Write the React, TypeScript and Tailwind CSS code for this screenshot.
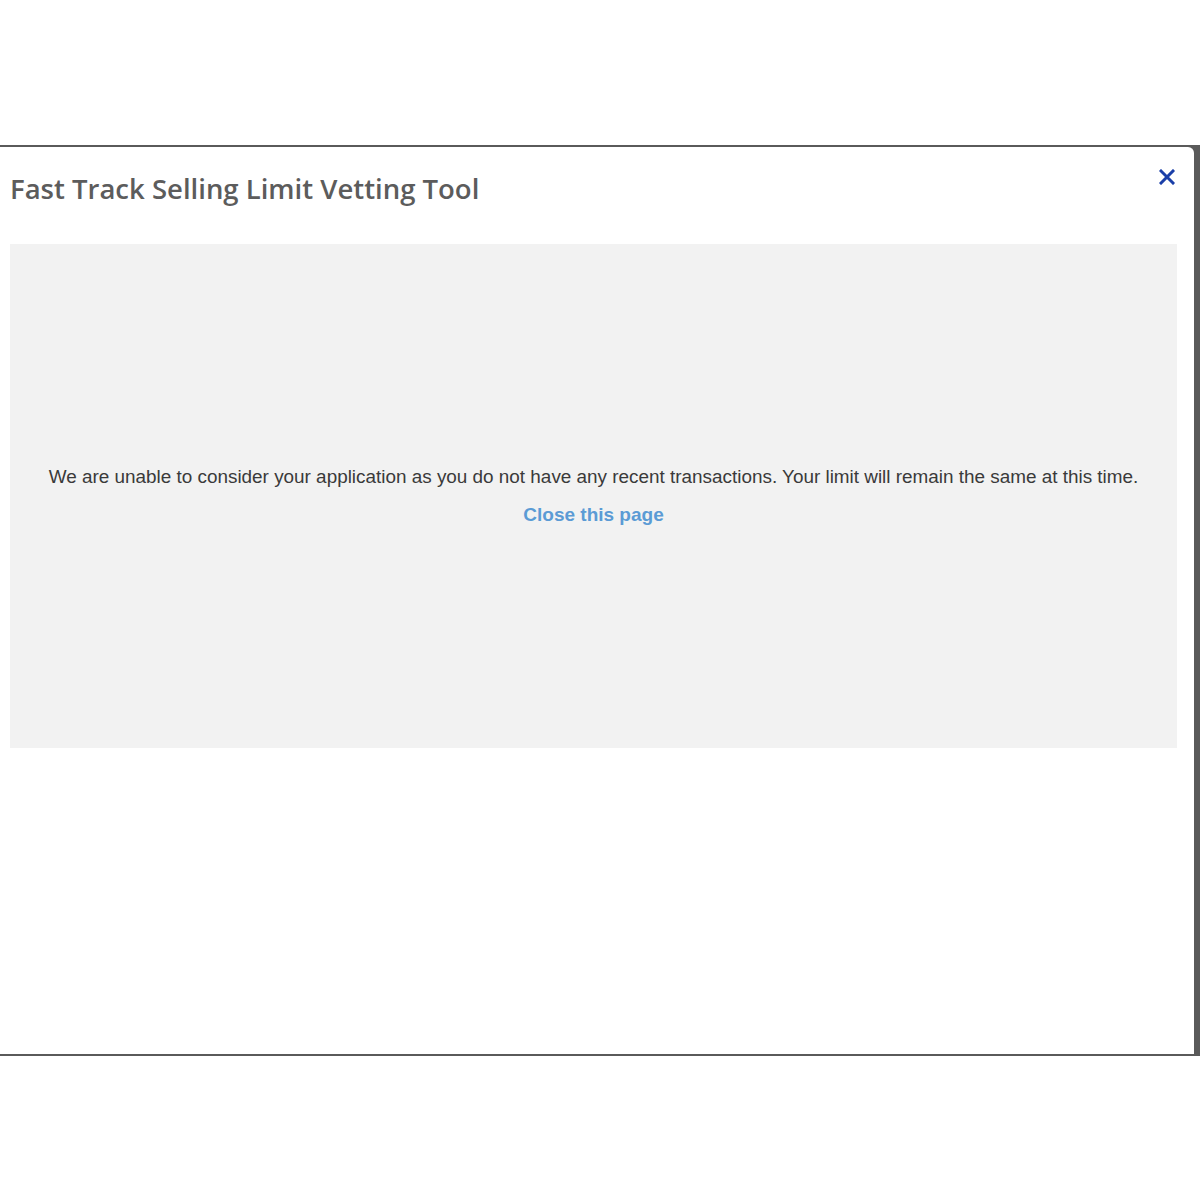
import React from 'react';

const App: React.FC = () => {
  return (
    <div className="w-[1200px] h-[1200px] bg-white overflow-hidden">
      {/* Backdrop strip behind the dialog */}
      <div className="mt-[145px] h-[911px] bg-[#5a5a5a] pt-[2px] pb-[2px] pr-[6px]">
        <div className="h-full bg-white rounded-tr-[6px] flex flex-col">
          {/* Header */}
          <div className="flex items-start justify-between pl-[10px] pr-[19px] pt-[23px] h-[97px]">
            <h1
              className="text-[27.5px] leading-[38px] font-semibold text-[#5c5c5c]"
              style={{ fontFamily: '"Open Sans", "DejaVu Sans", sans-serif' }}
            >
              Fast Track Selling Limit Vetting Tool
            </h1>
            <button className="mt-[-1px] text-[#1a3fa8]" aria-label="Close">
              <svg width="16" height="16" viewBox="0 0 16 16" fill="none">
                <path d="M2 2 L14 14 M14 2 L2 14" stroke="currentColor" strokeWidth="3" strokeLinecap="square" />
              </svg>
            </button>
          </div>

          {/* Message panel */}
          <div className="mx-[10px] mr-[17px] h-[504px] bg-[#f2f2f2] flex flex-col items-center justify-center">
            <p
              className="text-[18.9px] leading-[24px] text-[#3a3a3a] mt-[-1px]"
              style={{ fontFamily: '"Liberation Sans", Arial, sans-serif' }}
            >
              We are unable to consider your application as you do not have any recent transactions. Your limit will remain the same at this time.
            </p>
            <a
              href="#"
              className="mt-[14px] text-[19px] leading-[24px] font-bold text-[#5b9bd5]"
              style={{ fontFamily: '"Liberation Sans", Arial, sans-serif' }}
            >
              Close this page
            </a>
          </div>
        </div>
      </div>
    </div>
  );
};

export default App;
